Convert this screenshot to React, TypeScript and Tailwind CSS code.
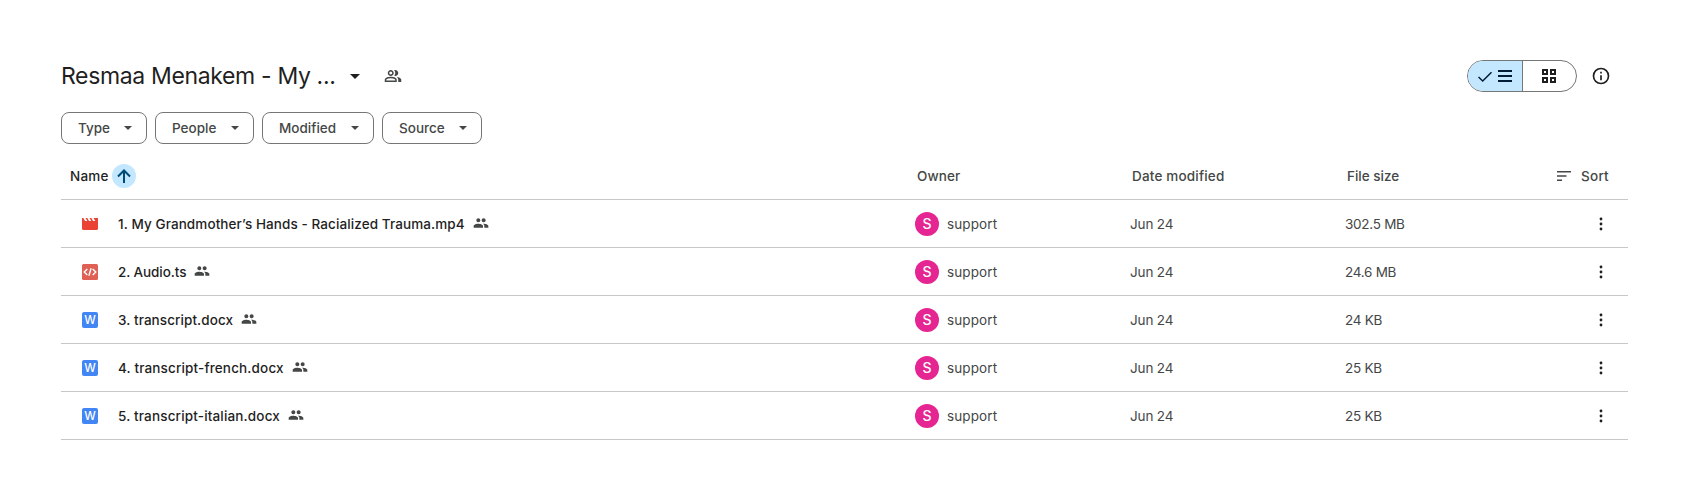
const files = [
  { kind: "video", name: "1. My Grandmother’s Hands - Racialized Trauma.mp4", size: "302.5 MB", track: "tracking-[0.09px]" },
  { kind: "code", name: "2. Audio.ts", size: "24.6 MB", track: "tracking-[-0.09px]" },
  { kind: "word", name: "3. transcript.docx", size: "24 KB", track: "tracking-[0.08px]" },
  { kind: "word", name: "4. transcript-french.docx", size: "25 KB", track: "tracking-[0.15px]" },
  { kind: "word", name: "5. transcript-italian.docx", size: "25 KB", track: "tracking-[0.16px]" },
];

const chips = [
  { label: "Type", width: "w-[86px]" },
  { label: "People", width: "w-[99px]" },
  { label: "Modified", width: "w-[112px]" },
  { label: "Source", width: "w-[100px]" },
];

function Caret({ className }: { className: string }) {
  return (
    <svg viewBox="0 0 10 5" className={className} fill="currentColor">
      <path d="M0 0h10L5 5z" />
    </svg>
  );
}

function SharedIcon() {
  return (
    <svg viewBox="0 0 24 24" className="mb-0.5 ml-2 size-4 shrink-0 text-[#444746]" fill="currentColor">
      <path d="M16 11c1.660 0 2.990-1.340 2.990-3S17.660 5 16 5s-3 1.340-3 3 1.340 3 3 3zm-8 0c1.660 0 2.990-1.340 2.990-3S9.660 5 8 5 5 6.340 5 8s1.340 3 3 3zm0 2c-2.330 0-7 1.170-7 3.500V19h14v-2.500c0-2.330-4.670-3.500-7-3.500zm8 0c-.29 0-.62.02-.97.05 1.160.84 1.970 1.970 1.970 3.450V19h6v-2.500c0-2.330-4.670-3.500-7-3.500z" />
    </svg>
  );
}

function FileIcon({ kind }: { kind: string }) {
  if (kind === "video")
    return (
      <svg viewBox="0 0 16 16" className="size-4" fill="#ea4335">
        <path d="M0 2h1.300l1.800 3h2.200L3.500 2h1.800l1.800 3h2.200L7.500 2h1.800l1.800 3h2.200l-1.800-3H16v10.500c0 .8-.7 1.500-1.500 1.500h-13C.7 14 0 13.300 0 12.500z" />
      </svg>
    );
  if (kind === "code")
    return (
      <svg viewBox="0 0 16 16" className="size-4" fill="none">
        <rect width="16" height="16" rx="1.500" fill="#e06055" />
        <path d="M5.300 5L2.200 8l3.100 3M10.700 5l3.100 3-3.100 3M9.100 4.200l-2.200 7.600" stroke="#fff" strokeWidth="1.400" />
      </svg>
    );
  return (
    <span className="flex size-4 items-center justify-center rounded-[2px] bg-[#4285f4] text-[11.500px] leading-4 font-medium text-white">W</span>
  );
}

export default function App() {
  return (
    <div className="h-[500px] w-[1700px] overflow-hidden bg-white pt-[60px] pr-[72px] pl-[61px] font-['Inter',sans-serif] text-[13.500px] text-[#444746]">
      <header className="flex h-8 items-center text-[#1f1f1f]">
        <h1 className="w-[289px] text-[23px] leading-8 tracking-[-0.35px] whitespace-nowrap">Resmaa Menakem - My ...</h1>
        <Caret className="h-[5px] w-[10px]" />
        <svg viewBox="0 -960 960 960" className="ml-6 size-[18px] text-[#444746]" fill="currentColor">
          <path d="M40-160v-112q0-34 17.500-62.500T104-378q62-31 126-46.500T360-440q66 0 130 15.500T616-378q29 15 46.500 43.500T680-272v112H40Zm720 0v-120q0-44-24.500-84.500T666-434q51 6 96 20.500t84 35.500q36 20 55 44.500t19 53.500v120H760ZM360-480q-66 0-113-47t-47-113q0-66 47-113t113-47q66 0 113 47t47 113q0 66-47 113t-113 47Zm400-160q0 66-47 113t-113 47q-11 0-28-2.500t-28-5.500q27-32 41.500-71t14.500-81q0-42-14.500-81T544-792q14-5 28-6.500t28-1.500q66 0 113 47t47 113ZM120-240h480v-32q0-11-5.500-20T580-306q-54-27-109-40.500T360-360q-56 0-111 13.500T140-306q-9 5-14.500 14t-5.500 20v32Zm240-320q33 0 56.500-23.500T440-640q0-33-23.500-56.500T360-720q-33 0-56.500 23.500T280-640q0 33 23.500 56.500T360-560Z" />
        </svg>
        <div className="ml-auto flex h-8 w-[110px] overflow-hidden rounded-full border border-[#747775]">
          <div className="flex w-[55px] items-center justify-center gap-[5px] border-r border-[#747775] bg-[#c2e7ff] text-[#001d35]">
            <svg viewBox="0 0 14 14" className="size-[15px]" fill="none" stroke="currentColor" strokeWidth="1.400">
              <path d="M.5 7.500l3.900 3.700L12.600 3" />
            </svg>
            <svg viewBox="0 0 14 14" className="size-[14px]" fill="currentColor">
              <path d="M0 1h14v2H0zM0 6h14v2H0zM0 11h14v2H0z" />
            </svg>
          </div>
          <div className="flex flex-1 items-center justify-center pr-[2px]">
            <svg viewBox="0 0 14 14" className="size-[14px]" fill="none" stroke="currentColor" strokeWidth="2">
              <path d="M1 1h4v4H1zM9 1h4v4H9zM1 9h4v4H1zM9 9h4v4H9z" />
            </svg>
          </div>
        </div>
        <svg viewBox="0 0 24 24" className="mr-[17px] ml-[14px] size-5" fill="currentColor">
          <path d="M11 17h2v-6h-2zm0-8h2V7h-2zm1-7a10 10 0 100 20 10 10 0 000-20zm0 18a8 8 0 110-16 8 8 0 010 16z" />
        </svg>
      </header>

      <div className="mt-5 flex gap-2 font-medium">
        {chips.map((c) => (
          <button key={c.label} className={`flex h-8 items-center justify-between rounded-lg border border-[#747775] pr-[14px] pl-4 ${c.width}`}>
            <span>{c.label}</span>
            <Caret className="h-1 w-2" />
          </button>
        ))}
      </div>

      <div className="mt-2 flex h-12 items-center border-b border-[#c7c7c7] font-medium">
        <div className="flex w-[856px] items-center pl-[9px] text-[#1f1f1f]">
          <span className="w-[42px] pt-0.5 tracking-[0.2px]">Name</span>
          <span className="flex size-6 items-center justify-center rounded-full bg-[#c2e7ff] text-[#004a77]">
            <svg viewBox="0 0 14 14" className="size-[14px]" fill="none" stroke="currentColor" strokeWidth="2">
              <path d="M7 14V2M1 7.500l6-6 6 6" />
            </svg>
          </span>
        </div>
        <span className="w-[215px] pt-0.5 tracking-[0.1px]">Owner</span>
        <span className="w-[215px] pt-0.5 tracking-[0.18px]">Date modified</span>
        <span className="flex-1 pt-0.5">File size</span>
        <svg viewBox="0 0 14 10" className="mr-[10px] h-[10px] w-[14px]" fill="currentColor">
          <path d="M0 0h14v1.500H0zM0 4.250h9.500v1.500H0zM0 8.500h5v1.500H0z" />
        </svg>
        <span className="w-[47px] pt-0.5 tracking-[0.25px]">Sort</span>
      </div>

      {files.map((f) => (
        <div key={f.name} className="flex h-12 items-center border-b border-[#c7c7c7]">
          <div className="flex w-[854px] items-center pl-[21px] font-medium text-[#1f1f1f]">
            <FileIcon kind={f.kind} />
            <span className={`ml-5 pt-0.5 whitespace-nowrap ${f.track}`}>{f.name}</span>
            <SharedIcon />
          </div>
          <div className="flex w-[215px] items-center gap-2">
            <span className="flex size-6 items-center justify-center rounded-full bg-[#e52592] text-[14px] font-medium text-white">S</span>
            <span className="pt-0.5 tracking-[0.1px]">support</span>
          </div>
          <span className="w-[215px] pt-0.5 tracking-[-0.15px]">Jun 24</span>
          <span className="flex-1 pt-0.5 tracking-[-0.27px]">{f.size}</span>
          <svg viewBox="0 0 4 14" className="mr-[25px] h-[14px] w-1 text-[#1f1f1f]" fill="currentColor">
            <circle cx="2" cy="2" r="1.400" />
            <circle cx="2" cy="7" r="1.400" />
            <circle cx="2" cy="12" r="1.400" />
          </svg>
        </div>
      ))}
    </div>
  );
}
